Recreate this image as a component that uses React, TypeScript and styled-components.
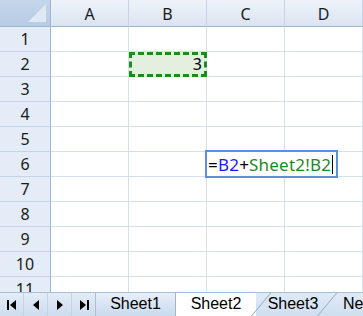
import React from "react"
import styled, { createGlobalStyle, css } from "styled-components"

const GlobalStyle = createGlobalStyle`
  html, body { margin: 0; padding: 0; background: #fff; }
  body { font-family: "Noto Sans", "Open Sans", sans-serif; }
`

const COLS = ["A", "B", "C", "D"]
const ROWS = Array.from({ length: 11 }, (_, i) => i + 1)
const SHEETS = ["Sheet1", "Sheet2", "Sheet3", "New"]
const ACTIVE_SHEET = 1

export default function App() {
  return (
    <>
      <GlobalStyle />
      <Frame>
        <Grid>
          <Corner>
            <CornerTriangle />
          </Corner>
          {COLS.map((c) => (
            <ColHeader key={c}>{c}</ColHeader>
          ))}
          {ROWS.map((r) => (
            <React.Fragment key={r}>
              <RowHeader>{r}</RowHeader>
              {COLS.map((c) => (
                <Cell key={c} $copied={r === 2 && c === "B"}>
                  {r === 2 && c === "B" && "3"}
                  {r === 6 && c === "C" && (
                    <Editor>
                      <Tok $kind="op">=</Tok>
                      <Tok $kind="ref">B2</Tok>
                      <Tok $kind="op">+</Tok>
                      <Tok $kind="ext">Sheet2!B2</Tok>
                      <Caret />
                    </Editor>
                  )}
                </Cell>
              ))}
            </React.Fragment>
          ))}
        </Grid>
        <TabBar>
          <NavGroup>
            <NavButton aria-label="first">
              <svg width="12" height="12" viewBox="0 0 12 12">
                <rect x="1" y="1" width="2" height="10" fill="#000" />
                <path d="M10 1 L4 6 L10 11 Z" fill="#000" />
              </svg>
            </NavButton>
            <NavButton aria-label="prev">
              <svg width="12" height="12" viewBox="0 0 12 12">
                <path d="M9 1 L3 6 L9 11 Z" fill="#000" />
              </svg>
            </NavButton>
            <NavButton aria-label="next">
              <svg width="12" height="12" viewBox="0 0 12 12">
                <path d="M3 1 L9 6 L3 11 Z" fill="#000" />
              </svg>
            </NavButton>
            <NavButton aria-label="last">
              <svg width="12" height="12" viewBox="0 0 12 12">
                <path d="M2 1 L8 6 L2 11 Z" fill="#000" />
                <rect x="9" y="1" width="2" height="10" fill="#000" />
              </svg>
            </NavButton>
          </NavGroup>
          <Tabs>
            {SHEETS.map((s, i) => (
              <Tab key={s} $active={i === ACTIVE_SHEET} $slanted={i > ACTIVE_SHEET}>
                {s}
              </Tab>
            ))}
          </Tabs>
        </TabBar>
      </Frame>
    </>
  )
}

const Frame = styled.div`
  width: 363px;
  height: 316px;
  display: flex;
  flex-direction: column;
  overflow: hidden;
  background: #fff;
`

const Grid = styled.div`
  flex: 1;
  min-height: 0;
  overflow: hidden;
  display: grid;
  grid-template-columns: 51px repeat(4, 78px);
  grid-template-rows: 27px repeat(11, 25px);
`

const headerBase = css`
  box-sizing: border-box;
  display: flex;
  align-items: center;
  justify-content: center;
  color: #1a1a1a;
  font-size: 16px;
  border-right: 1px solid #9eb6ce;
  border-bottom: 1px solid #9eb6ce;
`

const Corner = styled.div`
  ${headerBase};
  position: relative;
  background: linear-gradient(#c5d6ec, #b8cbe4);
  overflow: hidden;
`

const CornerTriangle = styled.div`
  position: absolute;
  right: 4px;
  bottom: 4px;
  width: 0;
  height: 0;
  border-left: 18px solid transparent;
  border-bottom: 18px solid #dfe8f4;
`

const ColHeader = styled.div`
  ${headerBase};
  background: linear-gradient(#eef3fa, #dae4f1);
  border-right-color: #c5d3e4;
  border-bottom-color: #9eb6ce;
  padding-top: 1px;
`

const RowHeader = styled.div`
  ${headerBase};
  background: #e4ecf7;
  border-bottom-color: #c5d3e4;
  border-right-color: #9eb6ce;
`

const Cell = styled.div<{ $copied?: boolean }>`
  box-sizing: border-box;
  position: relative;
  border-right: 1px solid #d7dfea;
  border-bottom: 1px solid #d7dfea;
  font-size: 16px;
  color: #000;
  display: flex;
  align-items: center;
  justify-content: flex-end;
  padding-right: 2px;
  ${(p) =>
    p.$copied &&
    css`
      background: #e3efdf;
      outline: 3px dashed #1f8a1f;
      outline-offset: -3px;
      padding-right: 4px;
      z-index: 1;
    `}
`

const Editor = styled.div`
  position: absolute;
  left: -2px;
  top: -2px;
  z-index: 2;
  box-sizing: border-box;
  height: 28px;
  padding: 0 3px 0 1px;
  display: flex;
  align-items: center;
  background: #fff;
  border: 2px solid #5b8fe0;
  font-size: 17px;
  letter-spacing: 0.2px;
  white-space: nowrap;
`

const tokColors = { op: "#000", ref: "#1a1aff", ext: "#1e8a1e" }

const Tok = styled.span<{ $kind: "op" | "ref" | "ext" }>`
  color: ${(p) => tokColors[p.$kind]};
`

const Caret = styled.span`
  display: inline-block;
  width: 1px;
  height: 19px;
  margin-left: 1px;
  background: #000;
`

const TabBar = styled.div`
  height: 24px;
  flex-shrink: 0;
  display: flex;
  background: linear-gradient(#e3ecf7, #cddcee);
  border-top: 1px solid #a9bfd6;
  box-sizing: border-box;
`

const NavGroup = styled.div`
  display: flex;
  width: 95px;
  border-right: 1px solid #a9bfd6;
`

const NavButton = styled.div`
  flex: 1;
  display: flex;
  align-items: center;
  justify-content: center;
  border-right: 1px solid #c3d3e6;
  &:last-child { border-right: none; }
`

const Tabs = styled.div`
  display: flex;
  flex: 1;
  overflow: hidden;
  align-items: stretch;
`

const Tab = styled.div<{ $active?: boolean; $slanted?: boolean }>`
  position: relative;
  flex-shrink: 0;
  width: 80px;
  box-sizing: border-box;
  display: flex;
  align-items: center;
  justify-content: center;
  font-family: "Liberation Sans", Arial, sans-serif;
  font-size: 16px;
  color: #000;
  margin-top: -1px;
  background: linear-gradient(#e9f0f9, #c9daee);
  border-right: 1px solid #9eb6ce;
  ${(p) =>
    p.$active &&
    css`
      background: #fff;
      border-right: none;
    `}
  ${(p) =>
    p.$slanted &&
    css`
      width: 66px;
      padding-left: 8px;
      background: linear-gradient(#e1ebf7, #cfdef0);
      border-right: none;
      &::before {
        content: "";
        position: absolute;
        left: 5px;
        top: 0;
        bottom: 0;
        width: 1px;
        background: #8fa9c6;
        transform: skewX(-40deg);
      }
    `}
`
